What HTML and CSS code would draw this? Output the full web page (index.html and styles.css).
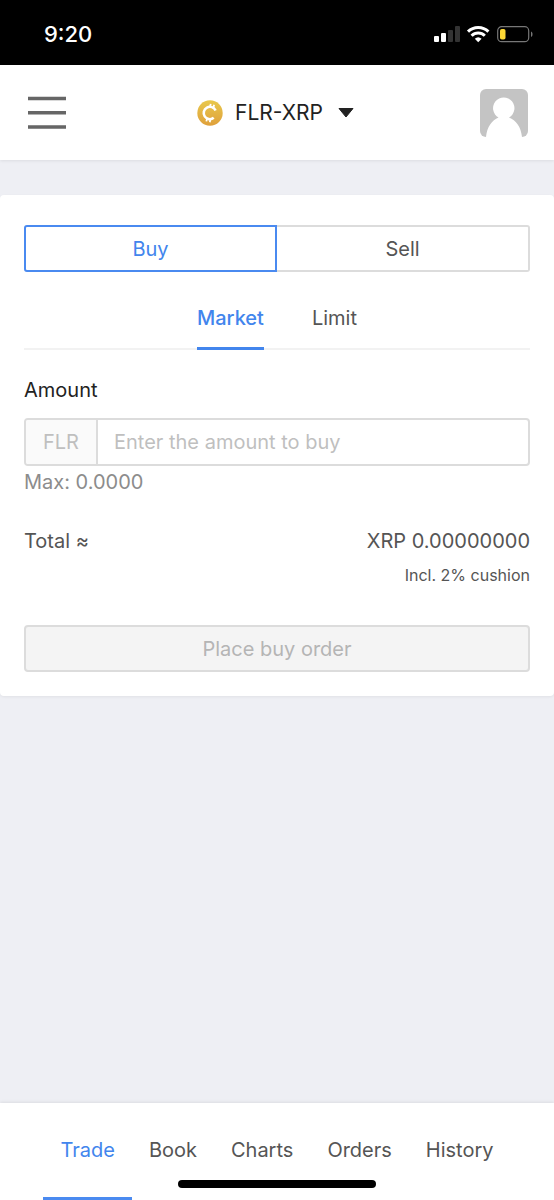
FILE: index.html
```html
<!DOCTYPE html>
<html lang="en">
<head>
<meta charset="utf-8">
<meta name="viewport" content="width=device-width, initial-scale=1">
<title>FLR-XRP Trade</title>
<link rel="stylesheet" href="styles.css">
</head>
<body>
<div class="status-bar">
  <span class="clock">9:20</span>
  <svg class="status-icons" width="100" height="18" viewBox="0 0 100 18" aria-hidden="true">
    <g fill="#fff">
      <rect x="0" y="11" width="5" height="6" rx="1"/>
      <rect x="7" y="8" width="5" height="9" rx="1"/>
    </g>
    <g fill="#333">
      <rect x="14" y="5" width="5" height="12" rx="1"/>
      <rect x="21" y="1" width="5" height="16" rx="1"/>
    </g>
    <g fill="none" stroke="#fff" stroke-width="3">
      <path d="M34 6.600a14.500 14.500 0 0 1 20.400 0"/>
      <path d="M37.600 10.800a9.300 9.300 0 0 1 13.200 0"/>
    </g>
    <path d="M44.200 17.300l-3.400-3.500a5 5 0 0 1 6.800 0z" fill="#fff"/>
    <rect x="63.700" y="1.700" width="31" height="15" rx="4" fill="none" stroke="#777" stroke-width="1.200"/>
    <rect x="66" y="4" width="5.500" height="10.500" rx="1.800" fill="#fdd835"/>
    <path d="M97 6.500c2 .7 2 4.800 0 5.500z" fill="#777"/>
  </svg>
</div>
<header class="top-bar">
  <button class="icon-button" type="button" aria-label="Menu">
    <svg width="38" height="34" viewBox="0 0 38 34"><path d="M0 2.500h38M0 16.700h38M0 31h38" stroke="#666" stroke-width="3.600"/></svg>
  </button>
  <button class="pair" type="button">
    <svg width="26" height="26" viewBox="0 0 26 26" aria-hidden="true">
      <defs><linearGradient id="gold" x1="0" y1="0" x2="0" y2="1"><stop offset="0" stop-color="#e8c84c"/><stop offset="1" stop-color="#dfa03b"/></linearGradient></defs>
      <circle cx="13" cy="13" r="12.700" fill="url(#gold)"/>
      <g fill="none" stroke="#fff" transform="rotate(14 13 13)">
        <path d="M17.800 9.200a6.200 6.200 0 1 0 0 7.600" stroke-width="2.600"/>
        <path d="M11.500 4v4M15 4v4M11.500 18v4M15 18v4" stroke-width="1.800"/>
      </g>
    </svg>
    <span>FLR-XRP</span>
    <svg width="16" height="10" viewBox="0 0 16 10" aria-hidden="true"><path d="M1 0.500h14L8 9z" fill="#222" stroke="#222" stroke-linejoin="round"/></svg>
  </button>
  <button class="icon-button" type="button" aria-label="Profile">
    <svg width="48" height="48" viewBox="0 0 48 48">
      <rect width="48" height="48" rx="6" fill="#c4c4c4"/>
      <path d="M6 48C7 38 12 31 18.500 28.500A10.700 10.700 0 1 1 29 28.500C36 31 41 38 42 48z" fill="#fff"/>
    </svg>
  </button>
</header>
<main class="content">
  <form class="card">
    <div class="side-switch">
      <button class="side side-active" type="button">Buy</button>
      <button class="side" type="button">Sell</button>
    </div>
    <div class="type-tabs">
      <button class="type-tab type-tab-active" type="button">Market</button>
      <button class="type-tab" type="button">Limit</button>
    </div>
    <label class="field-label" for="amount">Amount</label>
    <div class="field">
      <span class="unit">FLR</span>
      <input class="amount" id="amount" type="text" inputmode="decimal" placeholder="Enter the amount to buy">
    </div>
    <div class="hint">Max: 0.0000</div>
    <div class="total"><span>Total ≈</span><span>XRP 0.00000000</span></div>
    <div class="cushion">Incl. 2% cushion</div>
    <button class="submit" type="submit" disabled>Place buy order</button>
  </form>
</main>
<nav class="bottom-nav">
  <a class="nav-link nav-link-active" href="#trade">Trade</a>
  <a class="nav-link" href="#book">Book</a>
  <a class="nav-link" href="#charts">Charts</a>
  <a class="nav-link" href="#orders">Orders</a>
  <a class="nav-link" href="#history">History</a>
  <span class="home-indicator"></span>
</nav>
</body>
</html>
```
FILE: styles.css
```css
* { box-sizing: border-box; }
body {
  margin: 0;
  min-height: 100vh;
  display: flex;
  flex-direction: column;
  background: #eeeff4;
  color: #555;
  font: 20px/24px Inter, "Liberation Sans", sans-serif;
}
button, input { font: inherit; color: inherit; margin: 0; padding: 0; border: 0; background: none; }
svg { display: block; }
.status-bar {
  display: flex;
  align-items: center;
  justify-content: space-between;
  height: 65px;
  padding: 2px 20px 0 44px;
  background: #000;
  color: #fff;
}
.clock { font-size: 22px; font-weight: 500; }
.top-bar {
  display: flex;
  align-items: center;
  justify-content: space-between;
  height: 95px;
  padding: 0 26px 0 28px;
  background: #fff;
  box-shadow: 0 1px 3px rgba(0, 0, 0, 0.08);
}
.pair { display: flex; align-items: center; gap: 12px; padding-left: 5px; color: #222; }
.pair span { margin-right: 3px; font-size: 21px; }
.content { flex: 1; padding: 35px 0; }
.card {
  display: flex;
  flex-direction: column;
  padding: 30px 24px 24px;
  background: #fff;
  border-radius: 4px;
  box-shadow: 0 1px 3px rgba(0, 0, 0, 0.06);
}
.side-switch { display: grid; grid-template-columns: 1fr 1fr; height: 47px; }
.side { border: 2px solid #dcdcdc; border-left: 0; border-radius: 0 3px 3px 0; }
.side-active { border: 2px solid #4a8af0; border-radius: 3px 0 0 3px; color: #4285ed; }
.type-tabs {
  display: flex;
  justify-content: center;
  gap: 48px;
  margin-top: 21px;
  box-shadow: inset 0 -2px #f2f2f2;
}
.type-tab { padding: 13px 0 17px; border-bottom: 3px solid transparent; }
.type-tab-active { border-color: #4285ed; color: #4285ed; font-weight: 500; }
.field-label { margin-top: 28px; color: #222; }
.field {
  display: flex;
  height: 48px;
  margin-top: 16px;
  border: 2px solid #dcdcdc;
  border-radius: 4px;
  overflow: hidden;
}
.unit {
  display: flex;
  align-items: center;
  padding: 0 17px;
  border-right: 2px solid #dcdcdc;
  background: #fafafa;
  color: #bfbfbf;
}
.amount { flex: 1; min-width: 0; padding: 0 16px; }
.amount::placeholder { color: #bfbfbf; opacity: 1; }
.hint { margin-top: 4px; color: #8c8c8c; }
.total { display: flex; justify-content: space-between; margin-top: 35px; }
.cushion { margin-top: 10px; text-align: right; font-size: 16px; }
.submit {
  height: 47px;
  margin-top: 38px;
  border: 2px solid #dcdcdc;
  border-radius: 4px;
  background: #f4f4f4;
  color: #b5b5b5;
}
.bottom-nav {
  position: relative;
  display: flex;
  justify-content: center;
  background: #fff;
  box-shadow: 0 -1px 3px rgba(0, 0, 0, 0.08);
}
.nav-link {
  padding: 35px 17px;
  border-bottom: 3px solid transparent;
  color: #555;
  text-decoration: none;
}
.nav-link-active { border-color: #4a8af0; color: #4285ed; }
.home-indicator {
  position: absolute;
  bottom: 12px;
  left: 50%;
  width: 198px;
  height: 8px;
  border-radius: 4px;
  background: #000;
  transform: translateX(-50%);
}
```
